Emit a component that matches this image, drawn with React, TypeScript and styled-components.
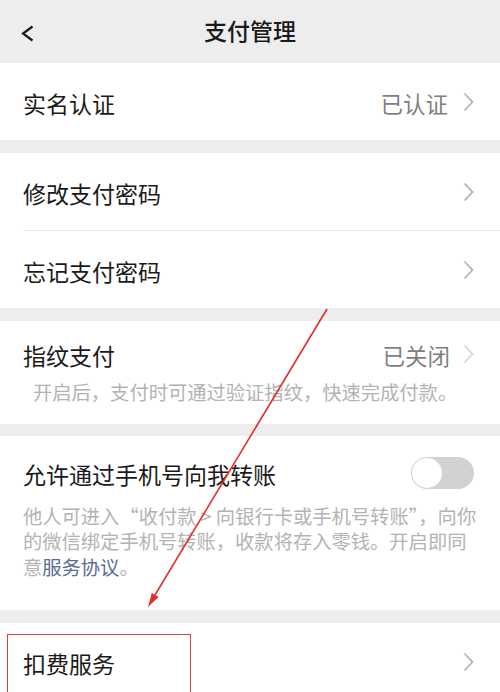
import React from 'react';
import styled, { createGlobalStyle } from 'styled-components';

const GlobalStyle = createGlobalStyle`
    html, body {
        margin: 0;
        padding: 0;
        background: #ededed;
    }
    body {
        font-family: "Noto Sans CJK SC", "Noto Sans", sans-serif;
        color: #1a1a1a;
    }
`;

const Page = styled.div`
    position: relative;
    width: 500px;
    height: 692px;
    overflow: hidden;
    background: #ededed;
`;

const Header = styled.div`
    height: 63px;
    display: flex;
    align-items: center;
    justify-content: center;
    position: relative;
`;

const BackButton = styled.div`
    position: absolute;
    left: 18px;
    top: 20px;
    width: 20px;
    height: 24px;
`;

const Title = styled.h1`
    margin: 0 0 3px;
    font-size: 23px;
    font-weight: 500;
    color: #1a1a1a;
`;

const Section = styled.div<{ $gap?: number }>`
    background: #ffffff;
    margin-top: ${p => p.$gap ?? 0}px;
    display: flex;
    flex-direction: column;
`;

const Row = styled.div`
    height: 77px;
    display: flex;
    align-items: center;
    padding: 0 26px 0 23px;
    gap: 15px;
`;

const Label = styled.div`
    flex: 1;
    font-size: 23px;
    line-height: 30px;
    padding-top: 2px;
`;

const Value = styled.div`
    font-size: 22.5px;
    color: #7f7f7f;
    padding-top: 2px;
`;

const Divider = styled.div`
    height: 1px;
    margin-left: 23px;
    background: #e6e6e6;
`;

const Block = styled.div<{ $top: number; $bottom: number }>`
    padding: ${p => p.$top}px 26px ${p => p.$bottom}px 23px;
    display: flex;
    flex-direction: column;
`;

const BlockHead = styled.div`
    display: flex;
    align-items: center;
    gap: 13px;
    height: 32px;
`;

const Note = styled.p<{ $indent?: number; $mt: number }>`
    margin: ${p => p.$mt}px 0 0 ${p => p.$indent ?? 0}px;
    font-size: 19.3px;
    line-height: 25.5px;
    color: #b3b3b3;
    white-space: nowrap;
`;

const NoteLink = styled.span`
    color: #576b95;
`;

const Track = styled.div<{ $on?: boolean }>`
    width: 63px;
    height: 32px;
    border-radius: 16px;
    background: ${p => (p.$on ? '#07c160' : '#d2d2d2')};
    display: flex;
    align-items: center;
    padding: 0 1px;
    box-sizing: border-box;
    justify-content: ${p => (p.$on ? 'flex-end' : 'flex-start')};
`;

const Knob = styled.div`
    width: 30px;
    height: 30px;
    border-radius: 50%;
    background: #ffffff;
`;

const HighlightBox = styled.div`
    position: absolute;
    left: 7px;
    top: 634px;
    width: 182px;
    height: 80px;
    border: 1.5px solid #d9453e;
    pointer-events: none;
`;

const Overlay = styled.svg`
    position: absolute;
    left: 0;
    top: 0;
    pointer-events: none;
`;

const Chevron: React.FC<{ light?: boolean }> = ({ light }) => (
    <svg width="11" height="20" viewBox="0 0 11 20">
        <polyline
            points="1.5,1.5 9.5,10 1.5,18.5"
            fill="none"
            stroke={light ? '#d6d6d6' : '#b2b2b2'}
            strokeWidth="1.8"
        />
    </svg>
);

const App: React.FC = () => {
    return (
        <Page>
            <GlobalStyle />
            <Header>
                <BackButton>
                    <svg width="20" height="24" viewBox="0 0 20 24">
                        <polyline
                            points="14.5,6.5 5,13.5 14.5,20.5"
                            fill="none"
                            stroke="#1a1a1a"
                            strokeWidth="2.2"
                        />
                    </svg>
                </BackButton>
                <Title>支付管理</Title>
            </Header>

            <Section>
                <Row>
                    <Label>实名认证</Label>
                    <Value>已认证</Value>
                    <Chevron />
                </Row>
            </Section>

            <Section $gap={13}>
                <Row>
                    <Label>修改支付密码</Label>
                    <Chevron />
                </Row>
                <Divider />
                <Row>
                    <Label>忘记支付密码</Label>
                    <Chevron />
                </Row>
            </Section>

            <Section $gap={13}>
                <Block $top={17} $bottom={18}>
                    <BlockHead>
                        <Label>指纹支付</Label>
                        <Value>已关闭</Value>
                        <Chevron light />
                    </BlockHead>
                    <Note $mt={10} $indent={10}>开启后，支付时可通过验证指纹，快速完成付款。</Note>
                </Block>
            </Section>

            <Section $gap={12}>
                <Block $top={21} $bottom={30}>
                    <BlockHead>
                        <Label>允许通过手机号向我转账</Label>
                        <Track>
                            <Knob />
                        </Track>
                    </BlockHead>
                    <Note $mt={15}>
                        他人可进入“收付款 &gt; 向银行卡或手机号转账”，向你
                        <br />
                        的微信绑定手机号转账，收款将存入零钱。开启即同
                        <br />
                        意<NoteLink>服务协议</NoteLink>。
                    </Note>
                </Block>
            </Section>

            <Section $gap={13}>
                <Row>
                    <Label>扣费服务</Label>
                    <Chevron />
                </Row>
            </Section>

            <HighlightBox />
            <Overlay width="500" height="692" viewBox="0 0 500 692">
                <line x1="327" y1="309" x2="155" y2="595" stroke="#e0302a" strokeWidth="1.6" />
                <polygon points="148,607 158.6,597.1 151.8,592.9" fill="#e0302a" />
            </Overlay>
        </Page>
    );
};

export default App;
